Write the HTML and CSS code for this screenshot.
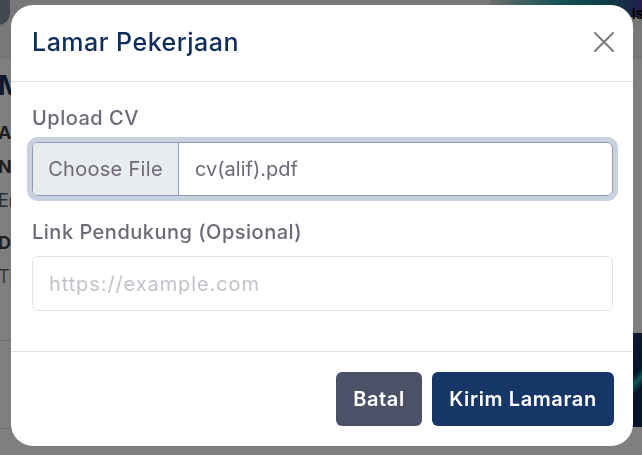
FILE: index.html
```html
<!DOCTYPE html>
<html lang="id">
<head>
<meta charset="utf-8">
<title>Lamar Pekerjaan</title>
<link rel="stylesheet" href="styles.css">
</head>
<body>
<div class="page">
  <header class="topbar">
    <span class="logo"></span>
    <div class="hero-strip"><span class="hero-text">ls</span></div>
  </header>
  <main class="layout">
    <section class="job">
      <h1 class="job-title">Magang Frontend Developer</h1>
      <p class="job-row strong">Alamat: Jakarta Selatan</p>
      <p class="job-row strong">Nama Perusahaan</p>
      <p class="job-row">Email: hr@perusahaan.co.id</p>
      <p class="job-row strong gap">Deskripsi</p>
      <p class="job-row muted">Tim kami sedang mencari talenta muda.</p>
      <div class="divider first"></div>
      <div class="divider second"></div>
    </section>
    <aside class="side">
      <div class="promo"></div>
    </aside>
  </main>
</div>

<div class="backdrop"></div>

<div class="modal" role="dialog" aria-labelledby="modal-title">
  <div class="modal-header">
    <h5 class="modal-title" id="modal-title">Lamar Pekerjaan</h5>
    <button class="close-btn" type="button" aria-label="Close">
      <svg viewBox="0 0 20 20" width="20" height="20"><path d="M1 1 L19 19 M19 1 L1 19" stroke="#7b7b7b" stroke-width="2" fill="none" stroke-linecap="round"/></svg>
    </button>
  </div>
  <div class="modal-body">
    <label class="form-label">Upload CV</label>
    <div class="file-input">
      <span class="file-btn">Choose File</span>
      <span class="file-name">cv(alif).pdf</span>
    </div>
    <label class="form-label second">Link Pendukung (Opsional)</label>
    <div class="text-input"><span class="placeholder">https://example.com</span></div>
  </div>
  <div class="modal-footer">
    <button class="btn btn-secondary" type="button">Batal</button>
    <button class="btn btn-primary" type="button">Kirim Lamaran</button>
  </div>
</div>
</body>
</html>
```
FILE: styles.css
```css
* { box-sizing: border-box; }
html, body { margin: 0; padding: 0; }
body {
  width: 642px;
  height: 455px;
  overflow: hidden;
  background: #ffffff;
  font-family: "Inter", "Noto Sans", sans-serif;
}

/* background page */
.page { display: flex; flex-direction: column; height: 455px; }
.topbar {
  height: 58px;
  display: flex;
  justify-content: space-between;
  align-items: flex-start;
  background: #f1f1f1;
  border-bottom: 1px solid #e2e2e2;
}
.logo {
  width: 20px;
  height: 25px;
  margin-left: -10px;
  border-radius: 0 0 12px 0;
  background: #8a90a4;
}
.hero-strip {
  width: 152px;
  height: 17px;
  background: linear-gradient(90deg, #d8d8d8 0%, #2aa6ab 45%, #197e86 75%, #4a3a9c 100%);
  display: flex;
  justify-content: flex-end;
  align-items: flex-start;
}
.hero-text { font-size: 15px; font-weight: 600; color: #000; line-height: 14px; margin-top: 7px; margin-right: -2px; }
.layout { display: flex; flex: 1; }
.job { flex: 1; padding-top: 12px; margin-left: -2px; }
.job-title { margin: 0 0 20px; font-size: 27px; font-weight: 700; color: #1b3357; line-height: 32px; white-space: nowrap; }
.job-row { margin: 0 0 12px; font-size: 18px; line-height: 22px; color: #5b5b5b; white-space: nowrap; }
.job-row.strong { font-weight: 700; color: #3c3c3c; }
.job-row.gap { margin-top: 20px; }
.job-row.muted { color: #6f6f6f; }
.divider { height: 1px; background: #d8d8d8; }
.divider.first { margin-top: 52px; }
.divider.second { margin-top: 87px; }
.side { width: 40px; padding-top: 275px; }
.promo {
  height: 94px;
  background: linear-gradient(135deg, #1d3a6e 0%, #0b2a55 55%, #1aa7a9 62%, #0b2a55 70%);
}

.backdrop {
  position: fixed;
  inset: 0;
  background: rgba(0, 0, 0, 0.5);
}

/* modal */
.modal {
  position: fixed;
  left: 11px;
  top: 5px;
  width: 622px;
  height: 441px;
  background: #fff;
  border-radius: 22px;
  display: flex;
  flex-direction: column;
  overflow: hidden;
}
.modal-header {
  height: 77px;
  border-bottom: 1px solid #dee2e6;
  display: flex;
  align-items: center;
  justify-content: space-between;
  padding: 0 19px 2px 21px;
}
.modal-title {
  margin: 0;
  font-size: 25px;
  font-weight: 500;
  color: #0f2d5c;
  letter-spacing: 0.5px;
}
.close-btn {
  border: 0;
  background: transparent;
  padding: 0;
  width: 20px;
  height: 20px;
  display: flex;
}
.modal-body {
  height: 269px;
  padding: 22px 20px 0 21px;
  display: flex;
  flex-direction: column;
}
.form-label {
  display: block;
  font-size: 20px;
  line-height: 28px;
  font-weight: 500;
  color: #6d6977;
  letter-spacing: 0.5px;
  margin-bottom: 10px;
}
.form-label.second { margin-top: 22px; }
.file-input {
  height: 54px;
  display: flex;
  border: 1px solid #8c9cb6;
  border-radius: 6px;
  box-shadow: 0 0 0 5px #c8d1de;
  overflow: hidden;
}
.file-btn {
  width: 146px;
  background: #e9ecef;
  border-right: 1px solid #8c9cb6;
  display: flex;
  align-items: center;
  justify-content: center;
  font-size: 20px;
  letter-spacing: 0.3px;
  color: #6d6977;
}
.file-name {
  display: flex;
  align-items: center;
  padding-left: 16px;
  font-size: 20px;
  color: #6d6977;
}
.text-input {
  height: 55px;
  border: 1px solid #dee2e6;
  border-radius: 6px;
  display: flex;
  align-items: center;
  padding-left: 16px;
}
.placeholder { font-size: 20px; letter-spacing: 0.9px; color: #c3c1c9; }
.modal-footer {
  flex: 1;
  border-top: 1px solid #dee2e6;
  display: flex;
  justify-content: flex-end;
  align-items: flex-start;
  gap: 10px;
  padding: 20px 19px 0 0;
}
.btn {
  height: 54px;
  border: 0;
  border-radius: 6px;
  padding: 0;
  font-family: inherit;
  font-size: 20px;
  font-weight: 600;
  letter-spacing: 0.6px;
  color: #fff;
}
.btn-secondary { background: #4b5166; width: 86px; }
.btn-primary { background: #163667; width: 182px; }
```
